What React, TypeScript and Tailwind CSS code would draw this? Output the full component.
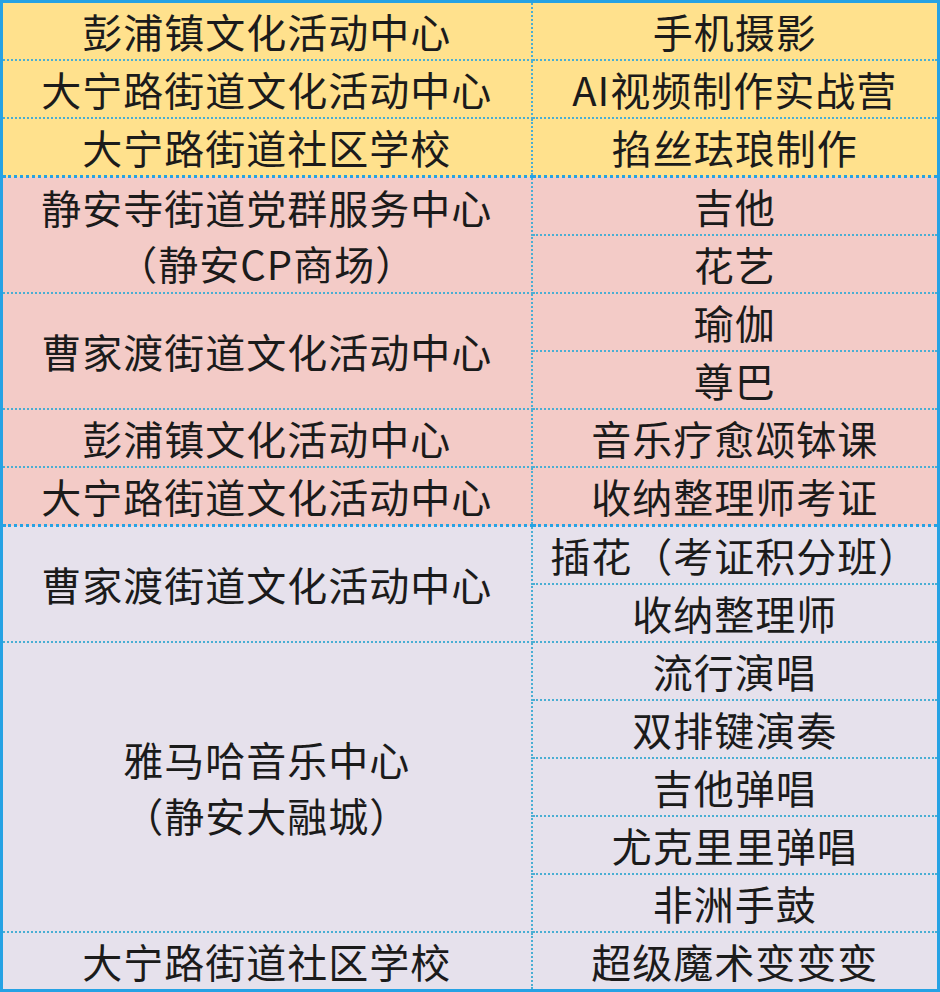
import React from "react";

type Row = { left?: string[]; span?: number; right: string; first?: boolean };
type Group = { bg: string; rows: Row[] };

const groups: Group[] = [
  {
    bg: "bg-[#ffe18d]",
    rows: [
      { left: ["彭浦镇文化活动中心"], right: "手机摄影", first: true },
      { left: ["大宁路街道文化活动中心"], right: "AI视频制作实战营" },
      { left: ["大宁路街道社区学校"], right: "掐丝珐琅制作" },
    ],
  },
  {
    bg: "bg-[#f3cbc7]",
    rows: [
      { left: ["静安寺街道党群服务中心", "（静安CP商场）"], span: 2, right: "吉他", first: true },
      { right: "花艺" },
      { left: ["曹家渡街道文化活动中心"], span: 2, right: "瑜伽" },
      { right: "尊巴" },
      { left: ["彭浦镇文化活动中心"], right: "音乐疗愈颂钵课" },
      { left: ["大宁路街道文化活动中心"], right: "收纳整理师考证" },
    ],
  },
  {
    bg: "bg-[#e6e1ec]",
    rows: [
      { left: ["曹家渡街道文化活动中心"], span: 2, right: "插花（考证积分班）", first: true },
      { right: "收纳整理师" },
      { left: ["雅马哈音乐中心", "（静安大融城）"], span: 5, right: "流行演唱" },
      { right: "双排键演奏" },
      { right: "吉他弹唱" },
      { right: "尤克里里弹唱" },
      { right: "非洲手鼓" },
      { left: ["大宁路街道社区学校"], right: "超级魔术变变变" },
    ],
  },
];

export default function App() {
  return (
    <div className="w-[940px] h-[992px] bg-white overflow-hidden">
      <table
        className="w-[940px] table-fixed border-collapse border-[3px] border-solid border-[#26a2e4] text-[40px] leading-[56px] text-[#1b1b1b] text-center"
        style={{ fontFamily: '"Noto Sans CJK SC", "Noto Sans", sans-serif' }}
      >
        <colgroup>
          <col className="w-[530px]" />
          <col />
        </colgroup>
        <tbody>
          {groups.map((g, gi) =>
            g.rows.map((r, ri) => {
              const top = r.first && gi > 0 ? "border-t-[3px] border-t-solid border-t-[#26a2e4]" : "";
              return (
                <tr key={`${gi}-${ri}`} className={`${g.bg} h-[56px]`}>
                  {r.left && (
                    <td
                      rowSpan={r.span ?? 1}
                      className={`border-2 border-dotted border-[#4aaed3] p-0 align-middle tracking-[1px] ${top}`}
                    >
                      {r.left.map((l, i) => (
                        <div key={i} className="leading-[56px] h-[56px]">
                          {l}
                        </div>
                      ))}
                    </td>
                  )}
                  <td className={`border-2 border-dotted border-[#4aaed3] p-0 h-[56px] align-middle tracking-[1px] ${top}`}>
                    <div className="leading-[56px] h-[56px]">{r.right}</div>
                  </td>
                </tr>
              );
            })
          )}
        </tbody>
      </table>
    </div>
  );
}
